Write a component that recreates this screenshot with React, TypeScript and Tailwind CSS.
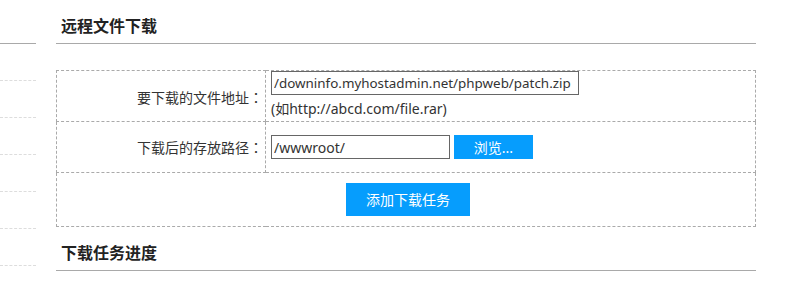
export default function App() {
  const font = { fontFamily: '"Noto Sans", "Noto Sans CJK SC", sans-serif' };
  // TC centres full-width punctuation like the reference
  const colon = <span style={{ fontFamily: '"Noto Sans CJK TC", sans-serif' }}>：</span>;
  return (
    <div className="flex w-[806px] h-[284px] bg-white text-[#333] overflow-hidden" style={font}>
      {/* sidebar stub */}
      <div className="w-[36px] shrink-0">
        <div className="h-[44px] border-b border-[#a9a9a9]" />
        {[0, 1, 2, 3, 4, 5].map(i => (
          <div key={i} className="h-[37px] border-b border-dashed border-[#ddd]" />
        ))}
      </div>

      <div className="ml-[20px] w-[700px] shrink-0">
        <div className="h-[44px] border-b border-[#a9a9a9] flex items-center pl-[5px] pt-[8px]">
          <h2 className="text-[16px] font-bold text-[#222]">远程文件下载</h2>
        </div>

        <table className="mt-[26px] w-full border-collapse text-[14px]">
          <tbody>
            <tr className="h-[51px]">
              <td className="w-[209px] border border-dashed border-[#aaa] text-right pr-[2px] align-middle pt-[3px]">
                要下载的文件地址{colon}
              </td>
              <td className="border border-dashed border-[#aaa] pl-[5px] align-top pt-0">
                <input
                  type="text"
                  defaultValue="/downinfo.myhostadmin.net/phpweb/patch.zip"
                  className="w-[308px] h-[24px] border border-[#666] pl-[2px] pr-0 text-[13.4px] text-[#333] outline-none"
                  style={font}
                />
                <div className="leading-[20px] mt-[4px] mb-[1px]">(如http://abcd.com/file.rar)</div>
              </td>
            </tr>
            <tr className="h-[51px]">
              <td className="border border-dashed border-[#aaa] text-right pr-[2px] align-middle">
                下载后的存放路径{colon}
              </td>
              <td className="border border-dashed border-[#aaa] pl-[5px] align-middle">
                <div className="flex items-center gap-[4px]">
                  <input
                    type="text"
                    defaultValue="/wwwroot/"
                    className="w-[179px] h-[24px] border border-[#666] px-[2px] text-[14px] text-[#333] outline-none"
                    style={font}
                  />
                  <button className="w-[79px] h-[24px] bg-[#069dfd] text-white text-[14px]">浏览...</button>
                </div>
              </td>
            </tr>
            <tr className="h-[54px]">
              <td colSpan={2} className="border border-dashed border-[#aaa] text-center align-middle">
                <button className="w-[124px] h-[33px] bg-[#069dfd] text-white text-[14px] ml-[4px]">添加下载任务</button>
              </td>
            </tr>
          </tbody>
        </table>

        <div className="h-[44px] border-b border-[#a9a9a9] flex items-center pl-[5px] pt-[9px]">
          <h2 className="text-[16px] font-bold text-[#222]">下载任务进度</h2>
        </div>
      </div>
    </div>
  );
}
